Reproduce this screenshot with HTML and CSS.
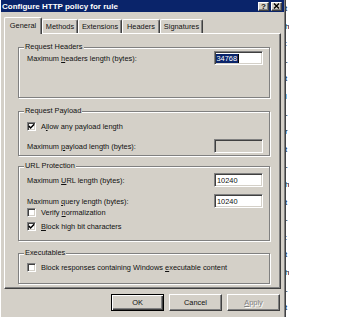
FILE: index.html
```html
<!DOCTYPE html>
<html>
<head>
  <title>Configure HTTP policy for rule</title>
  <link rel="stylesheet" href="styles.css">
</head>
<body>
  <div class="screen">
    <div class="dialog">
      <div class="titlebar">
        <span class="title">Configure HTTP policy for rule</span>
        <span class="cap-btn">?</span>
        <span class="cap-btn">
          <svg width="7" height="6" viewBox="0 0 7 6"><path d="M1,0.5 L6,5.5 M6,0.5 L1,5.5" stroke="#000" stroke-width="1.4" fill="none"/></svg>
        </span>
      </div>

      <div class="tabs">
        <div class="tab active" style="width:38px">General</div>
        <div class="tab" style="width:36px">Methods</div>
        <div class="tab" style="width:44px">Extensions</div>
        <div class="tab" style="width:38px">Headers</div>
        <div class="tab" style="width:43px">Signatures</div>
      </div>

      <div class="panel">
        <div class="group g-headers">
          <div class="legend">Request Headers</div>
          <div class="row first">
            <span>Maximum <u>h</u>eaders length (bytes):</span>
            <span class="edit"><span class="sel">34768</span><i class="caret"></i></span>
          </div>
        </div>

        <div class="group g-payload">
          <div class="legend">Request Payload</div>
          <div class="check-row first">
            <span class="box checked">
              <svg width="7" height="7" viewBox="0 0 7 7"><path d="M0.8,3 L2.6,5 L6.2,1.2" stroke="#000" stroke-width="1.5" fill="none"/></svg>
            </span>
            <span>A<u>l</u>low any payload length</span>
          </div>
          <div class="row second">
            <span>Maximum <u>p</u>ayload length (bytes):</span>
            <span class="edit disabled"></span>
          </div>
        </div>

        <div class="group g-url">
          <div class="legend">URL Protection</div>
          <div class="row url">
            <span>Maximum <u>U</u>RL length (bytes):</span>
            <span class="edit">10240</span>
          </div>
          <div class="row query">
            <span>Maximum <u>q</u>uery length (bytes):</span>
            <span class="edit">10240</span>
          </div>
          <div class="check-row">
            <span class="box"></span>
            <span>Verify <u>n</u>ormalization</span>
          </div>
          <div class="check-row later">
            <span class="box checked">
              <svg width="7" height="7" viewBox="0 0 7 7"><path d="M0.8,3 L2.6,5 L6.2,1.2" stroke="#000" stroke-width="1.5" fill="none"/></svg>
            </span>
            <span><u>B</u>lock high bit characters</span>
          </div>
        </div>

        <div class="group g-exec">
          <div class="legend">Executables</div>
          <div class="check-row exec">
            <span class="box"></span>
            <span>Block responses containing Windows <u>e</u>xecutable content</span>
          </div>
        </div>
      </div>

      <div class="buttons">
        <span class="button default">OK</span>
        <span class="button">Cancel</span>
        <span class="button disabled"><u>A</u>pply</span>
      </div>
    </div>

    <div class="behind">
      <span>t</span><span>h</span><span>:</span><span>-</span><span>t</span><span>l</span>
      <span>-</span><span>r</span><span>t</span><span>-</span><span>h</span><span>t</span>
      <span>-</span><span>:</span><span>t</span><span>h</span><span>-</span><span>t</span>
    </div>
  </div>
</body>
</html>
```

FILE: styles.css
```css
body {
  margin: 0;
  background: #fff;
  font-family: "Liberation Sans", Arial, sans-serif;
  font-size: 7.4px;
  color: #111;
}
u {
  text-decoration-thickness: 1px;
  text-underline-offset: 1px;
}
.screen {
  display: flex;
  width: 354px;
  height: 317px;
  overflow: hidden;
}
.dialog {
  flex: none;
  width: 286px;
  height: 330px;
  box-sizing: border-box;
  background: #d4d0c8;
  border-left: 1px solid #fff;
  border-right: 1px solid #404040;
  box-shadow: inset -1px 0 #808080;
}

/* title bar */
.titlebar {
  display: flex;
  align-items: center;
  height: 12px;
  margin-right: 1px;
  padding: 0 2px 0 1px;
  background: #0a246a;
}
.title {
  flex: 1;
  color: #fff;
  font-weight: bold;
  font-size: 8px;
}
.cap-btn {
  display: flex;
  align-items: center;
  justify-content: center;
  width: 11px;
  height: 9px;
  margin-left: 2px;
  box-sizing: border-box;
  background: #d4d0c8;
  border-top: 1px solid #fff;
  border-left: 1px solid #fff;
  border-right: 1px solid #404040;
  border-bottom: 1px solid #404040;
  box-shadow: inset -1px -1px #808080;
  font-weight: bold;
  font-size: 8px;
  line-height: 7px;
}

/* tabs */
.tabs {
  display: flex;
  align-items: flex-end;
  height: 16px;
  margin-top: 5px;
  padding-left: 3px;
}
.tab {
  height: 14px;
  box-sizing: border-box;
  display: flex;
  align-items: center;
  justify-content: center;
  border-top: 1px solid #fff;
  border-left: 1px solid #fff;
  border-right: 1px solid #404040;
  box-shadow: inset -1px 0 #808080;
  border-radius: 2px 2px 0 0;
}
.tab.active {
  position: relative;
  z-index: 1;
  height: 17px;
  margin-bottom: -1px;
  background: #d4d0c8;
  padding-bottom: 2px;
}

/* tab page */
.panel {
  height: 256px;
  margin: 0 4px 0 3px;
  box-sizing: border-box;
  padding: 13px 10px 0 13px;
  border-top: 1px solid #fff;
  border-left: 1px solid #fff;
  border-right: 1px solid #404040;
  border-bottom: 1px solid #404040;
  box-shadow: inset -1px -1px #808080;
}
.group {
  box-sizing: border-box;
  padding: 0 6px 0 8px;
  border: 1px solid #808080;
  box-shadow: inset 1px 1px #fff, 1px 1px #fff;
}
.g-headers { height: 51px; }
.g-payload { height: 45px; margin-top: 13px; }
.g-url { height: 75px; margin-top: 10px; }
.g-exec { height: 31px; margin-top: 12px; }
.legend {
  display: table;
  margin: -5px 0 0 -3px;
  padding: 0 1px;
  line-height: 8px;
  background: #d4d0c8;
}
.row {
  display: flex;
  align-items: center;
  justify-content: space-between;
  height: 14px;
}
.row.first { margin-top: 0; }
.row.second { margin-top: 8px; }
.row.url { margin-top: 3px; }
.row.query { margin-top: 7px; }
.edit {
  display: flex;
  align-items: center;
  width: 49px;
  height: 14px;
  box-sizing: border-box;
  padding-left: 2px;
  background: #fff;
  border-top: 1px solid #808080;
  border-left: 1px solid #808080;
  border-right: 1px solid #fff;
  border-bottom: 1px solid #fff;
  box-shadow: inset 1px 1px #404040, inset -1px -1px #d4d0c8;
}
.edit.disabled {
  background: #d4d0c8;
}
.sel {
  margin-left: -1px;
  padding: 0 0.5px;
  background: #0a246a;
  color: #fff;
  line-height: 9px;
}
.caret {
  width: 1px;
  height: 9px;
  background: #000;
}
.check-row {
  display: flex;
  align-items: center;
  gap: 5px;
  height: 9px;
  margin-top: 7px;
}
.g-url .check-row { margin-top: 0; }
.g-url .check-row.later { margin-top: 5px; }
.check-row.exec { margin-top: 6px; }
.box {
  display: flex;
  align-items: center;
  justify-content: center;
  width: 9px;
  height: 9px;
  box-sizing: border-box;
  background: #fff;
  border-top: 1px solid #808080;
  border-left: 1px solid #808080;
  border-right: 1px solid #fff;
  border-bottom: 1px solid #fff;
  box-shadow: inset 1px 1px #404040, inset -1px -1px #d4d0c8;
}

/* buttons */
.buttons {
  display: flex;
  justify-content: flex-end;
  gap: 5px;
  margin-top: 5px;
  padding-right: 5px;
}
.button {
  display: flex;
  align-items: center;
  justify-content: center;
  width: 53px;
  height: 17px;
  box-sizing: border-box;
  border-top: 1px solid #fff;
  border-left: 1px solid #fff;
  border-right: 1px solid #404040;
  border-bottom: 1px solid #404040;
  box-shadow: inset -1px -1px #808080;
}
.button.default {
  border: 1px solid #000;
  box-shadow: inset 1px 1px #fff, inset -1px -1px #404040, inset -2px -2px #808080;
}
.button.disabled {
  color: #808080;
  text-shadow: 1px 1px #fff;
}

/* window behind the dialog */
.behind {
  flex: 1;
  display: flex;
  flex-direction: column;
  overflow: hidden;
  background: #fff;
  color: #000;
  font-size: 8px;
  line-height: 17.6px;
}
.behind span {
  margin-left: -1px;
  width: 4px;
  overflow: hidden;
}
```
